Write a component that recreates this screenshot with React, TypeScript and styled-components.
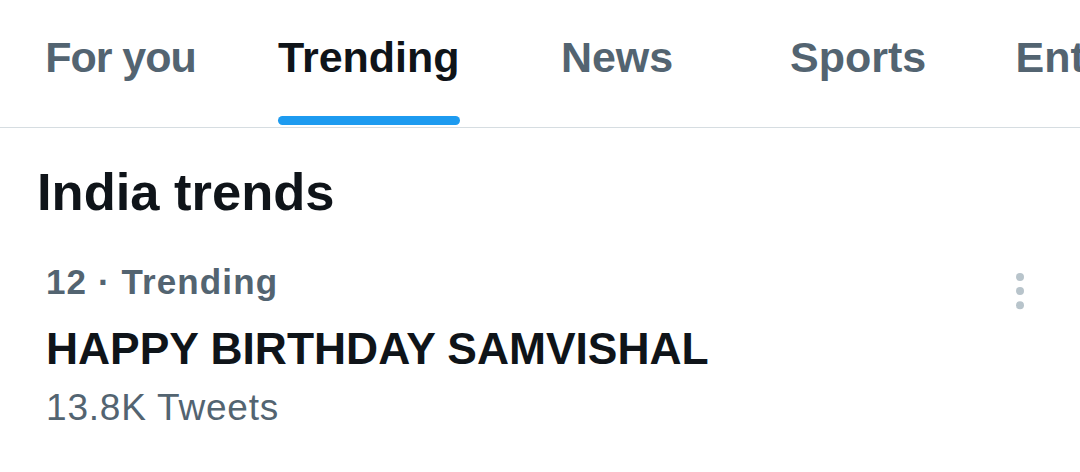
import React from "react";
import styled, { createGlobalStyle } from "styled-components";

const Global = createGlobalStyle`
  html, body { margin: 0; padding: 0; background: #ffffff; }
  body { font-family: "Liberation Sans", Arial, sans-serif; -webkit-font-smoothing: antialiased; }
  * { box-sizing: border-box; }
`;

const Page = styled.div`
  width: 1080px;
  height: 472px;
  overflow: hidden;
  background: #ffffff;
  display: flex;
  flex-direction: column;
`;

const TabBar = styled.nav`
  display: flex;
  height: 128px;
  border-bottom: 1px solid #d6dde1;
  overflow: hidden;
  flex-shrink: 0;
`;

const Tab = styled.div`
  flex-shrink: 0;
  min-width: 241px;
  height: 127px;
  padding: 36px 37px 2px;
  display: flex;
  flex-direction: column;
  align-items: center;
`;

const TabLabel = styled.span<{ $active?: boolean; $tight?: boolean }>`
  font-size: 43px;
  line-height: 43px;
  font-weight: 700;
  white-space: nowrap;
  letter-spacing: ${(p) => (p.$tight ? "-1px" : "0")};
  color: ${(p) => (p.$active ? "#0f1419" : "#536471")};
`;

const Indicator = styled.div`
  margin-top: auto;
  align-self: stretch;
  height: 9px;
  border-radius: 5px;
  background: #1d9bf0;
`;

const SectionTitle = styled.h2`
  margin: 34px 0 0;
  padding-left: 37px;
  font-size: 52.5px;
  line-height: 60px;
  font-weight: 700;
  color: #0f1419;
`;

const TrendRow = styled.div`
  display: flex;
  align-items: flex-start;
  justify-content: space-between;
  padding: 0 56px 0 46px;
  margin-top: 40px;
`;

const TrendBody = styled.div`
  display: flex;
  flex-direction: column;
`;

const TrendMeta = styled.div`
  font-size: 35px;
  line-height: 40px;
  font-weight: 700;
  letter-spacing: 1.1px;
  color: #536471;
`;

const TrendName = styled.div`
  margin-top: 22px;
  font-size: 44.4px;
  line-height: 50px;
  font-weight: 700;
  color: #0f1419;
  white-space: nowrap;
`;

const TrendCount = styled.div`
  margin-top: 12px;
  font-size: 37px;
  line-height: 44px;
  font-weight: 400;
  letter-spacing: 0.8px;
  color: #536471;
`;

const MoreButton = styled.div`
  margin-top: 11px;
  width: 8px;
  display: flex;
`;

const MoreIcon = () => (
  <svg width="8" height="37" viewBox="0 0 8 37" aria-hidden="true">
    <circle cx="4" cy="4" r="4" fill="#b8c4cb" />
    <circle cx="4" cy="18" r="4" fill="#b8c4cb" />
    <circle cx="4" cy="32.3" r="4" fill="#b8c4cb" />
  </svg>
);

const tabs = [
  { label: "For you", tight: true },
  { label: "Trending", active: true },
  { label: "News" },
  { label: "Sports" },
  { label: "Entertainment" },
];

export default function App() {
  return (
    <>
      <Global />
      <Page>
        <TabBar>
          {tabs.map((t) => (
            <Tab key={t.label}>
              <TabLabel $active={t.active} $tight={t.tight}>
                {t.label}
              </TabLabel>
              {t.active && <Indicator />}
            </Tab>
          ))}
        </TabBar>
        <SectionTitle>India trends</SectionTitle>
        <TrendRow>
          <TrendBody>
            <TrendMeta>12 · Trending</TrendMeta>
            <TrendName>HAPPY BIRTHDAY SAMVISHAL</TrendName>
            <TrendCount>13.8K Tweets</TrendCount>
          </TrendBody>
          <MoreButton>
            <MoreIcon />
          </MoreButton>
        </TrendRow>
      </Page>
    </>
  );
}
